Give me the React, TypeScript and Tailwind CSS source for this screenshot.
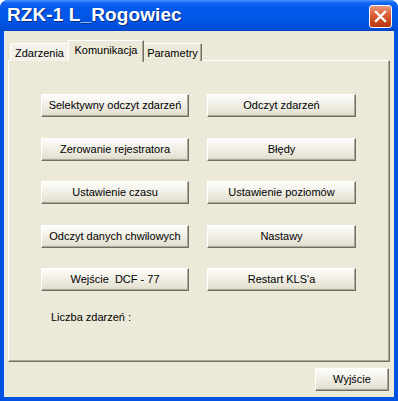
import { Fragment } from 'react';

const font = "font-['Liberation_Sans',Arial,sans-serif]";

function XpButton({ label, className = '' }: { label: string; className?: string }) {
  return (
    <button
      className={`h-[23px] border border-t-white border-l-white border-r-[#716f64] border-b-[#716f64] bg-[linear-gradient(180deg,#fdfdfb_0%,#f1efe6_45%,#e6e3d4_85%,#d9d5c3_100%)] shadow-[inset_-1px_-1px_0_#aca899] text-[11px] leading-none text-black whitespace-pre ${className}`}
    >
      {label}
    </button>
  );
}

const rows: [string, string][] = [
  ['Selektywny odczyt zdarzeń', 'Odczyt zdarzeń'],
  ['Zerowanie rejestratora', 'Błędy'],
  ['Ustawienie czasu', 'Ustawienie poziomów'],
  ['Odczyt danych chwilowych', 'Nastawy'],
  ['Wejście  DCF - 77', "Restart KLS'a"],
];

export default function App() {
  return (
    <div className={`${font} w-[398px] h-[401px] flex flex-col rounded-t-[8px] bg-[#0053e1] overflow-hidden`}>
      {/* title bar */}
      <div className="h-[31px] shrink-0 flex items-center justify-between pl-[7px] pr-[6px] bg-[linear-gradient(180deg,#4a96ff_0%,#1164f4_10%,#0058ea_30%,#0055e5_65%,#0050dc_88%,#0147cc_100%)]">
        <span className="text-white font-bold text-[19px] tracking-[0.1px] [text-shadow:1px_1px_0_#0c2a7a]">
          RZK-1 L_Rogowiec
        </span>
        <div className="w-[23px] h-[23px] rounded-[3px] border border-white bg-[linear-gradient(180deg,#ea9a80_0%,#de6640_35%,#c9431c_75%,#b8360f_100%)] flex items-center justify-center mt-[1px]">
          <svg width="13" height="13" viewBox="0 0 13 13">
            <path d="M2 2 L11 11 M11 2 L2 11" stroke="white" strokeWidth="2.4" strokeLinecap="square" />
          </svg>
        </div>
      </div>

      {/* body */}
      <div className="flex-1 mx-[4px] mb-[4px] bg-[#ece9d8] border-l border-[#e8eefc] px-[3px] pt-[9px] flex flex-col">
        {/* tabs */}
        <div className="flex items-end pl-[2px] h-[21px] relative z-10">
          <div className="w-[58px] h-[18px] border-t border-l border-white bg-[#f3f1e8] text-[11px] flex items-center justify-center pt-[1px]">
            Zdarzenia
          </div>
          <div className="w-[76px] h-[22px] -mb-px border-t border-l border-white border-r border-r-[#716f64] shadow-[inset_-1px_0_0_#aca899] bg-[#ece9d8] text-[11px] flex items-center justify-center pb-[3px]">
            Komunikacja
          </div>
          <div className="w-[58px] h-[18px] border-t border-white border-r border-r-[#716f64] shadow-[inset_-1px_0_0_#aca899] bg-[#ece9d8] text-[11px] flex items-center justify-center pt-[1px]">
            Parametry
          </div>
        </div>

        {/* panel */}
        <div className="w-[382px] h-[302px] -mt-px border border-t-white border-l-white border-r-[#716f64] border-b-[#716f64] shadow-[inset_-1px_-1px_0_#aca899] pl-[32px] pt-[33px]">
          <div className="grid grid-cols-[148px_149px] gap-x-[18px] gap-y-[20.5px]">
            {rows.map(([a, b]) => (
              <Fragment key={a}>
                <XpButton label={a} />
                <XpButton label={b} />
              </Fragment>
            ))}
          </div>
          <div className="mt-[20px] ml-[10px] text-[11px] leading-[13px] text-black">Liczba zdarzeń :</div>
        </div>

        {/* footer */}
        <div className="flex justify-end pt-[6px] pr-[2px]">
          <XpButton label="Wyjście" className="w-[74px]" />
        </div>
      </div>
    </div>
  );
}
